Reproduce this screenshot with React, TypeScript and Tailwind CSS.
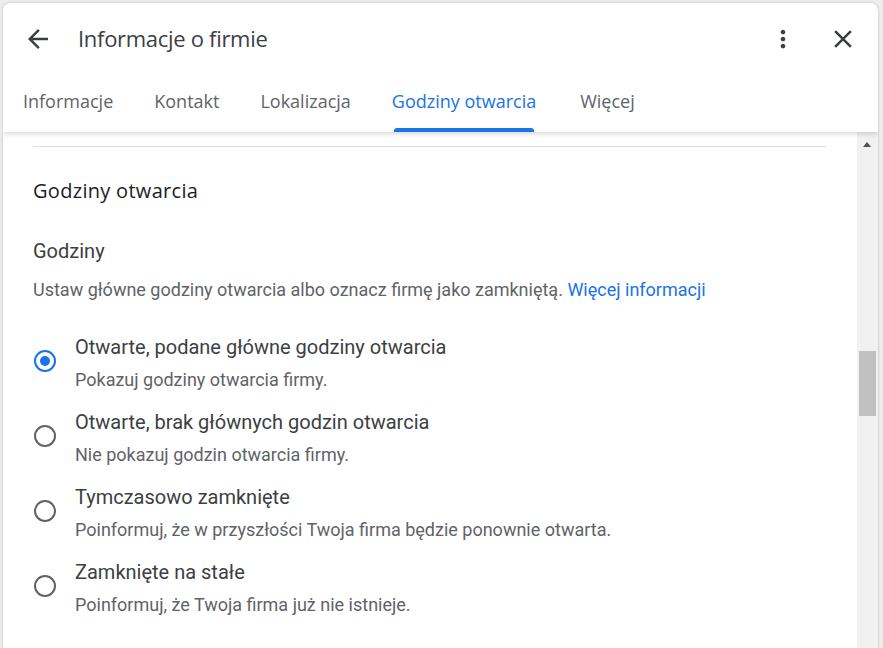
import React, { useState } from 'react';

const tabs = ['Informacje', 'Kontakt', 'Lokalizacja', 'Godziny otwarcia', 'Więcej'];

const options = [
  { title: 'Otwarte, podane główne godziny otwarcia', desc: 'Pokazuj godziny otwarcia firmy.' },
  { title: 'Otwarte, brak głównych godzin otwarcia', desc: 'Nie pokazuj godzin otwarcia firmy.' },
  { title: 'Tymczasowo zamknięte', desc: 'Poinformuj, że w przyszłości Twoja firma będzie ponownie otwarta.' },
  { title: 'Zamknięte na stałe', desc: 'Poinformuj, że Twoja firma już nie istnieje.' },
];

const Radio = ({ checked }) => (
  <div
    className={`w-[22px] h-[22px] rounded-full border-2 flex items-center justify-center shrink-0 ${
      checked ? 'border-[#1a73e8]' : 'border-[#5f6368]'
    }`}
  >
    {checked && <div className="w-[10px] h-[10px] rounded-full bg-[#1a73e8]" />}
  </div>
);

const App = () => {
  const [selected, setSelected] = useState(0);
  const activeTab = 3;

  return (
    <div className="w-[883px] h-[648px] bg-[#ededed] pl-[3px] pt-[3px] overflow-hidden font-['Roboto',sans-serif]">
      <div className="w-[875px] h-[645px] bg-white rounded-t-lg flex flex-col shadow-[0_0_3px_rgba(0,0,0,0.2)] overflow-hidden">
        {/* header */}
        <div className="relative z-10 bg-white shadow-[0_2px_5px_rgba(0,0,0,0.16)]">
          <div className="h-[71px] flex items-center pl-[20px] pr-[20px]">
            <svg viewBox="0 0 24 24" className="w-[30px] h-[30px] fill-[#3c4043]">
              <path d="M20 11H7.83l5.59-5.59L12 4l-8 8 8 8 1.41-1.41L7.83 13H20v-2z" />
            </svg>
            <h1 className="ml-[25px] text-[22px] text-[#3c4043] font-['Open_Sans',sans-serif] tracking-[-0.3px]">
              Informacje o firmie
            </h1>
            <div className="flex-1" />
            <svg viewBox="0 0 24 24" className="w-[28px] h-[28px] fill-[#3c4043]">
              <path d="M12 8c1.1 0 2-.9 2-2s-.9-2-2-2-2 .9-2 2 .9 2 2 2zm0 2c-1.1 0-2 .9-2 2s.9 2 2 2 2-.9 2-2-.9-2-2-2zm0 6c-1.1 0-2 .9-2 2s.9 2 2 2 2-.9 2-2-.9-2-2-2z" />
            </svg>
            <svg viewBox="0 0 24 24" className="ml-[31px] w-[30px] h-[30px] fill-[#3c4043]">
              <path d="M19 6.41L17.59 5 12 10.59 6.41 5 5 6.41 10.59 12 5 17.59 6.41 19 12 13.41 17.59 19 19 17.59 13.41 12z" />
            </svg>
          </div>
          <div className="h-[58px] flex pl-[20px]">
            {tabs.map((t, i) => (
              <div key={t} className={`relative h-full pt-[15px] ${i === 4 ? 'ml-[44px]' : i > 0 ? 'ml-[41px]' : ''}`}>
                <span
                  className={`text-[18px] font-medium leading-[24px] font-['Open_Sans',sans-serif] ${
                    i === activeTab ? 'text-[#1a73e8]' : 'text-[#5f6368]'
                  }`}
                >
                  {t}
                </span>
                {i === activeTab && (
                  <div className="absolute bottom-0 left-[2px] right-[2px] h-[4px] rounded-t-[3px] bg-[#1a73e8]" />
                )}
              </div>
            ))}
          </div>
        </div>

        {/* body */}
        <div className="flex flex-1 min-h-0">
          <div className="flex-1 pl-[30px] pr-[31px] pt-[14px]">
            <div className="border-t border-[#dadce0]" />
            <h2 className="mt-[32px] text-[20px] leading-[24px] font-medium text-[#202124] font-['Open_Sans',sans-serif] tracking-[0.3px]">
              Godziny otwarcia
            </h2>
            <h3 className="mt-[36px] text-[20px] leading-[24px] text-[#3c4043]">Godziny</h3>
            <p className="mt-[15px] text-[18px] leading-[24px] text-[#5f6368]">
              Ustaw główne godziny otwarcia albo oznacz firmę jako zamkniętą.{' '}
              <span className="text-[#1a73e8]">Więcej informacji</span>
            </p>
            <div className="mt-[33px] flex flex-col gap-[18px]">
              {options.map((o, i) => (
                <div key={o.title} className="flex cursor-pointer" onClick={() => setSelected(i)}>
                  <div className="mt-[15px] ml-[1px]">
                    <Radio checked={selected === i} />
                  </div>
                  <div className="ml-[19px]">
                    <div className="text-[20px] leading-[24px] text-[#3c4043]">{o.title}</div>
                    <div className="mt-[9px] text-[18px] leading-[24px] text-[#5f6368]">{o.desc}</div>
                  </div>
                </div>
              ))}
            </div>
          </div>

          {/* scrollbar */}
          <div className="w-[21px] bg-[#f1f1f1] flex flex-col items-center pr-[1px]">
            <div className="mt-[10px] w-0 h-0 border-l-[4px] border-r-[4px] border-b-[5px] border-l-transparent border-r-transparent border-b-[#505050]" />
            <div className="mt-[204px] w-[17px] h-[65px] bg-[#c1c1c1]" />
          </div>
        </div>
      </div>
    </div>
  );
};

export default App;
